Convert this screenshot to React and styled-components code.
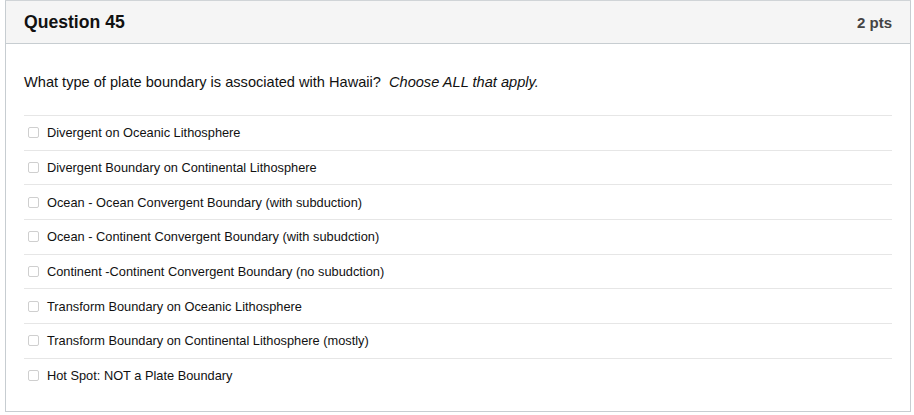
import React from 'react'
import styled, { createGlobalStyle } from 'styled-components'

const GlobalStyle = createGlobalStyle`
  html, body {
    margin: 0;
    padding: 0;
    background: #fff;
  }
  body {
    font-family: "Liberation Sans", Arial, Helvetica, sans-serif;
    color: #2d3b45;
  }
`

const Card = styled.section`
  width: 906px;
  margin-left: 5px;
  box-sizing: border-box;
  border: 1px solid #c7cdd1;
  border-top-color: #d0d4d7;
  background: #fff;
`

const Header = styled.header`
  display: flex;
  align-items: center;
  justify-content: space-between;
  height: 42px;
  padding: 0 18px;
  background: #f5f5f5;
  border-bottom: 1px solid #c7cdd1;
`

const Title = styled.h2`
  margin: 0;
  font-size: 17.6px;
  font-weight: bold;
  color: #111;
`

const Points = styled.span`
  font-size: 15px;
  font-weight: bold;
  color: #444;
`

const Body = styled.div`
  padding: 29px 18px 18px;
`

const Prompt = styled.p`
  margin: 0 0 24px;
  font-size: 14.6px;
  line-height: 18px;
  color: #111;

  em {
    margin-left: 4px;
  }
`

const Options = styled.ul`
  list-style: none;
  margin: 0;
  padding: 0;
`

const Option = styled.li`
  display: flex;
  align-items: center;
  gap: 8px;
  height: 33.7px;
  padding-left: 4px;
  border-top: 1px solid #e6e6e6;
  font-size: 12.8px;
  color: #111;
`

const Box = styled.span`
  width: 9px;
  height: 9px;
  border: 1px solid #cfcfcf;
  border-radius: 2px;
  background: #fff;
  flex-shrink: 0;
`

const answers = [
  'Divergent on Oceanic Lithosphere',
  'Divergent Boundary on Continental Lithosphere',
  'Ocean - Ocean Convergent Boundary (with subduction)',
  'Ocean - Continent Convergent Boundary (with subudction)',
  'Continent -Continent Convergent Boundary (no subudction)',
  'Transform Boundary on Oceanic Lithosphere',
  'Transform Boundary on Continental Lithosphere (mostly)',
  'Hot Spot: NOT a Plate Boundary',
]

export default function App() {
  return (
    <>
      <GlobalStyle />
      <Card>
        <Header>
          <Title>Question 45</Title>
          <Points>2 pts</Points>
        </Header>
        <Body>
          <Prompt>
            What type of plate boundary is associated with Hawaii? <em>Choose ALL that apply.</em>
          </Prompt>
          <Options>
            {answers.map((a) => (
              <Option key={a}>
                <Box />
                {a}
              </Option>
            ))}
          </Options>
        </Body>
      </Card>
    </>
  )
}
